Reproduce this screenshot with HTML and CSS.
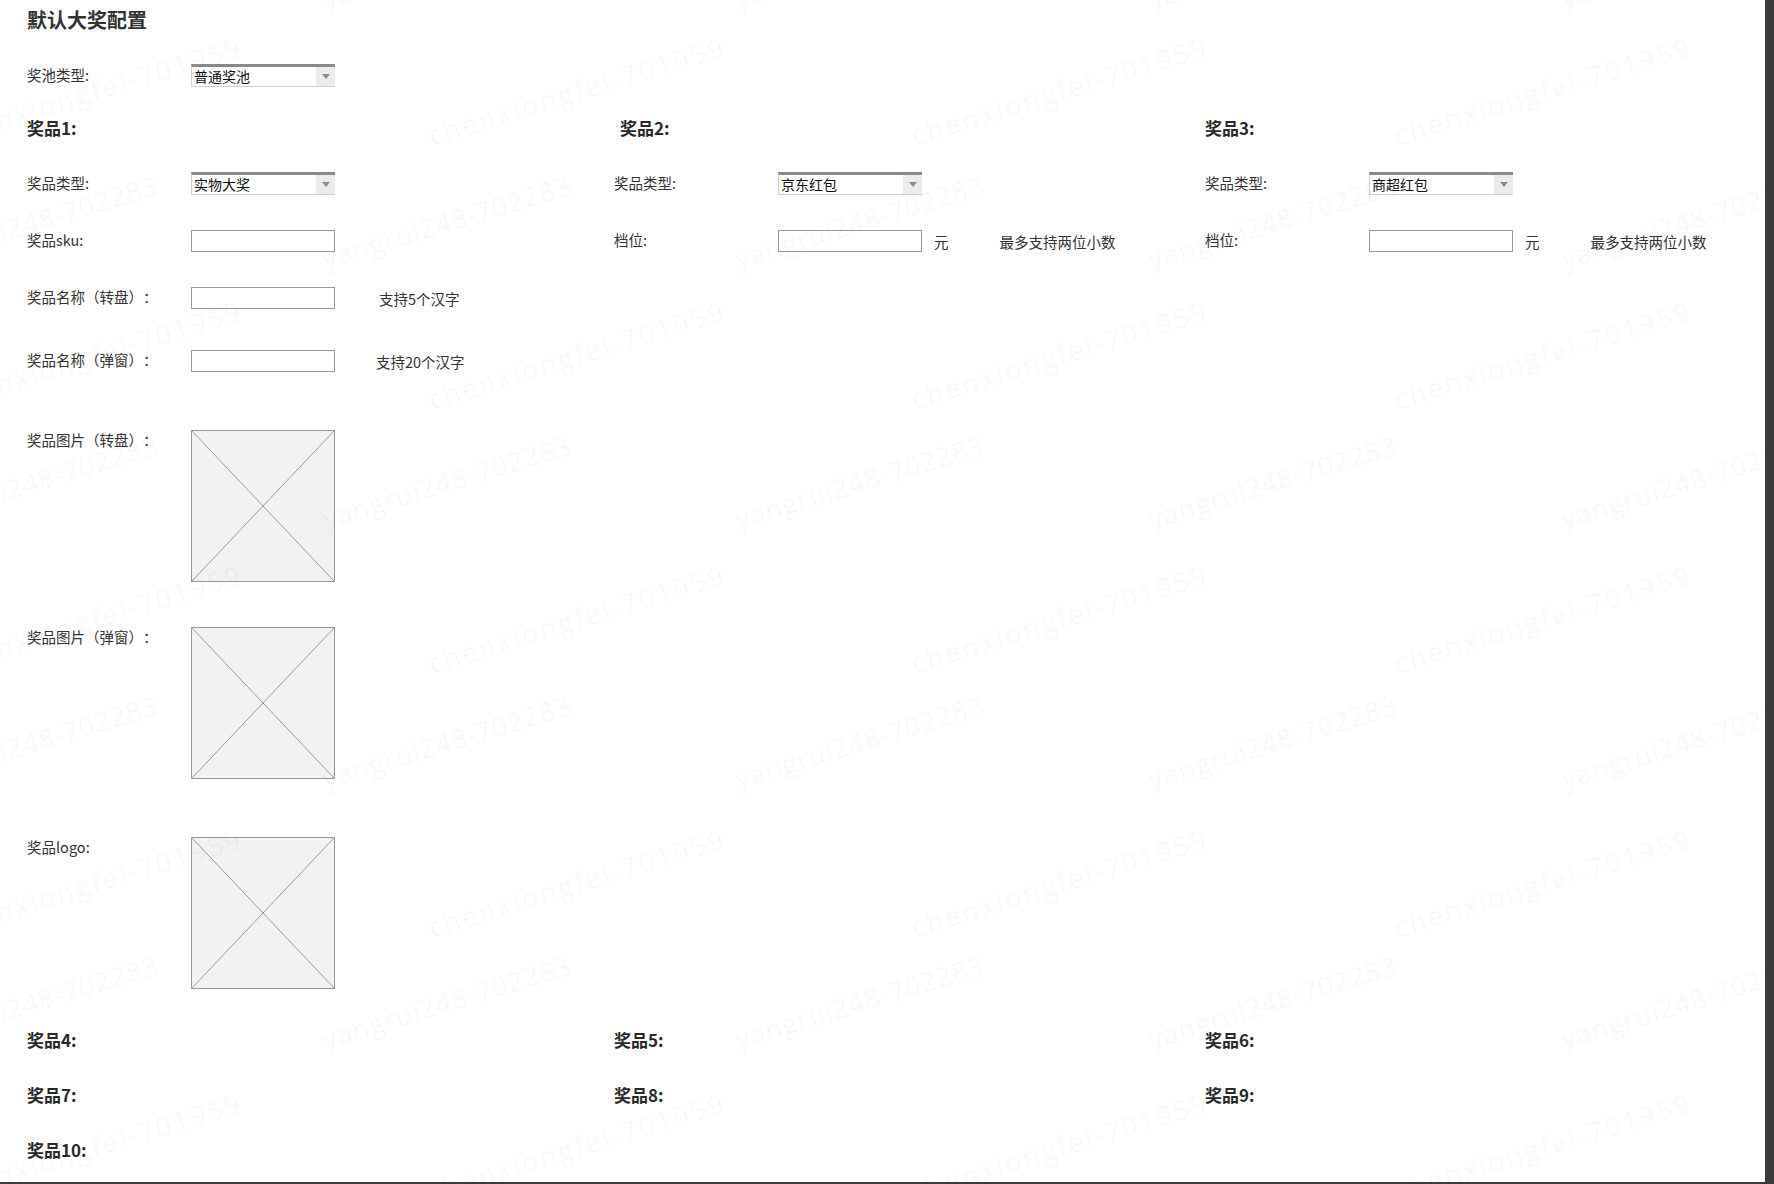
FILE: index.html
```html
<!DOCTYPE html>
<html lang="zh-CN">
<head>
  <meta charset="UTF-8" />
  <title>默认大奖配置</title>
  <link rel="stylesheet" href="styles.css">
</head>
<body>
  <div class="page">
    <h1 class="page-title">默认大奖配置</h1>

    <!-- Pool type -->
    <div class="field pool-field">
      <span class="field-label">奖池类型:</span>
      <div class="select"><span class="select-value">普通奖池</span><span class="select-arrow"></span></div>
    </div>

    <!-- Prizes 1-3 -->
    <div class="prize-grid">
      <section class="prize">
        <h2 class="prize-title">奖品1:</h2>
        <div class="field field-first">
          <span class="field-label">奖品类型:</span>
          <div class="select"><span class="select-value">实物大奖</span><span class="select-arrow"></span></div>
        </div>
        <div class="field">
          <span class="field-label">奖品sku:</span>
          <div class="input"></div>
        </div>
        <div class="field">
          <span class="field-label">奖品名称（转盘）：</span>
          <div class="input"></div>
          <span class="hint">支持5个汉字</span>
        </div>
        <div class="field field-loose">
          <span class="field-label">奖品名称（弹窗）：</span>
          <div class="input"></div>
          <span class="hint hint-near">支持20个汉字</span>
        </div>
        <div class="field field-image gap-lg">
          <span class="field-label">奖品图片（转盘）：</span>
          <div class="image-box">
            <svg viewBox="0 0 144 152" preserveAspectRatio="none"><line x1="0" y1="0" x2="144" y2="152"/><line x1="144" y1="0" x2="0" y2="152"/></svg>
          </div>
        </div>
        <div class="field field-image">
          <span class="field-label">奖品图片（弹窗）：</span>
          <div class="image-box">
            <svg viewBox="0 0 144 152" preserveAspectRatio="none"><line x1="0" y1="0" x2="144" y2="152"/><line x1="144" y1="0" x2="0" y2="152"/></svg>
          </div>
        </div>
        <div class="field field-image gap-lg">
          <span class="field-label">奖品logo:</span>
          <div class="image-box">
            <svg viewBox="0 0 144 152" preserveAspectRatio="none"><line x1="0" y1="0" x2="144" y2="152"/><line x1="144" y1="0" x2="0" y2="152"/></svg>
          </div>
        </div>
      </section>

      <section class="prize">
        <h2 class="prize-title shifted">奖品2:</h2>
        <div class="field field-first">
          <span class="field-label">奖品类型:</span>
          <div class="select"><span class="select-value">京东红包</span><span class="select-arrow"></span></div>
        </div>
        <div class="field">
          <span class="field-label">档位:</span>
          <div class="input"></div>
          <span class="unit">元</span>
          <span class="hint">最多支持两位小数</span>
        </div>
      </section>

      <section class="prize">
        <h2 class="prize-title">奖品3:</h2>
        <div class="field field-first">
          <span class="field-label">奖品类型:</span>
          <div class="select"><span class="select-value">商超红包</span><span class="select-arrow"></span></div>
        </div>
        <div class="field">
          <span class="field-label">档位:</span>
          <div class="input"></div>
          <span class="unit">元</span>
          <span class="hint">最多支持两位小数</span>
        </div>
      </section>
    </div>

    <!-- Prizes 4-10 (collapsed) -->
    <div class="prize-list">
      <h2 class="prize-title">奖品4:</h2>
      <h2 class="prize-title">奖品5:</h2>
      <h2 class="prize-title">奖品6:</h2>
      <h2 class="prize-title">奖品7:</h2>
      <h2 class="prize-title">奖品8:</h2>
      <h2 class="prize-title">奖品9:</h2>
      <h2 class="prize-title">奖品10:</h2>
    </div>

    <!-- Watermark -->
    <div class="watermark" aria-hidden="true">
      <div class="wm-layer wm-chen">
        <span>chenxiongfei-701959</span><span>chenxiongfei-701959</span><span>chenxiongfei-701959</span><span>chenxiongfei-701959</span>
        <span>chenxiongfei-701959</span><span>chenxiongfei-701959</span><span>chenxiongfei-701959</span><span>chenxiongfei-701959</span>
        <span>chenxiongfei-701959</span><span>chenxiongfei-701959</span><span>chenxiongfei-701959</span><span>chenxiongfei-701959</span>
        <span>chenxiongfei-701959</span><span>chenxiongfei-701959</span><span>chenxiongfei-701959</span><span>chenxiongfei-701959</span>
        <span>chenxiongfei-701959</span><span>chenxiongfei-701959</span><span>chenxiongfei-701959</span><span>chenxiongfei-701959</span>
      </div>
      <div class="wm-layer wm-yang">
        <span>yangrui248-702283</span><span>yangrui248-702283</span><span>yangrui248-702283</span><span>yangrui248-702283</span><span>yangrui248-702283</span>
        <span>yangrui248-702283</span><span>yangrui248-702283</span><span>yangrui248-702283</span><span>yangrui248-702283</span><span>yangrui248-702283</span>
        <span>yangrui248-702283</span><span>yangrui248-702283</span><span>yangrui248-702283</span><span>yangrui248-702283</span><span>yangrui248-702283</span>
        <span>yangrui248-702283</span><span>yangrui248-702283</span><span>yangrui248-702283</span><span>yangrui248-702283</span><span>yangrui248-702283</span>
        <span>yangrui248-702283</span><span>yangrui248-702283</span><span>yangrui248-702283</span><span>yangrui248-702283</span><span>yangrui248-702283</span>
      </div>
    </div>
  </div>
</body>
</html>
```

FILE: styles.css
```css
/* Global */
body {
  margin: 0;
  background: #3c3c3c;
  color: #333;
  font-family: "Noto Sans CJK SC", "Liberation Sans", sans-serif;
  font-size: 14.5px;
  text-spacing-trim: space-all;
}
h1, h2 {
  margin: 0;
}
.page {
  position: relative;
  width: 1765px;
  height: 1182px;
  box-sizing: border-box;
  padding: 8px 0 0 27px;
  background: #fff;
  overflow: hidden;
}
.page-title {
  font-size: 20px;
  line-height: 24px;
  font-weight: bold;
}
/* Form rows */
.field {
  display: flex;
  align-items: center;
  margin-top: 35px;
}
.field-label {
  width: 164px;
  flex-shrink: 0;
  line-height: 20px;
  margin-top: -2px;
}
.pool-field { margin-top: 32px; }
.field-first { margin-top: 33px; }
.field-loose { margin-top: 41px; }
.field-image {
  align-items: flex-start;
  margin-top: 45px;
}
.field-image .field-label { margin-top: 0; }
.field-image.gap-lg { margin-top: 58px; }
/* Fake select */
.select {
  display: flex;
  width: 144px;
  height: 23px;
  box-sizing: border-box;
  border: 1px solid #d0d0d0;
  border-top: 3px solid #8a8a8a;
  border-right: none;
  background: #fff;
}
.select-value {
  flex: 1;
  padding-left: 2px;
  line-height: 18px;
  font-size: 14px;
  color: #111;
}
.select-arrow {
  width: 19px;
  display: flex;
  align-items: center;
  justify-content: center;
  background: #ececec;
}
.select-arrow::after {
  content: "";
  border-left: 4px solid transparent;
  border-right: 4px solid transparent;
  border-top: 5px solid #8c8c8c;
}
/* Text input */
.input {
  width: 144px;
  height: 22px;
  box-sizing: border-box;
  border: 1px solid #9a9a9a;
  background: #fff;
}
.unit {
  margin-left: 12px;
}
.hint {
  margin-left: 44px;
}
.hint-near { margin-left: 41px; }
.unit + .hint { margin-left: 51px; }
/* Image placeholder */
.image-box {
  width: 144px;
  height: 152px;
  box-sizing: border-box;
  border: 1px solid #999;
  background: #f2f2f2;
}
.image-box svg {
  display: block;
  width: 100%;
  height: 100%;
}
.image-box line {
  stroke: #999;
  stroke-width: 1;
}
/* Prize columns */
.prize-grid {
  display: grid;
  grid-template-columns: 587px 591px 1fr;
  margin-top: 30px;
}
.prize-title {
  font-size: 17px;
  line-height: 22px;
  font-weight: bold;
  color: #2a2a2a;
}
.prize-title.shifted { padding-left: 6px; }
.prize-list {
  display: grid;
  grid-template-columns: 587px 591px 1fr;
  grid-auto-rows: 22px;
  row-gap: 33px;
  margin-top: 40px;
}
/* Watermark overlay */
.watermark {
  position: absolute;
  inset: 0;
  overflow: hidden;
  pointer-events: none;
}
.wm-layer {
  position: absolute;
  display: grid;
}
.wm-chen {
  left: -148px;
  top: -42px;
  grid-template-columns: repeat(4, 483px);
  grid-auto-rows: 264px;
}
.wm-yang {
  left: -173px;
  top: -169px;
  grid-template-columns: repeat(5, 413px);
  grid-auto-rows: 260px;
}
.wm-layer span {
  display: flex;
  align-items: center;
  justify-content: center;
  transform: rotate(-17deg);
  font-family: "Open Sans", sans-serif;
  font-size: 27px;
  letter-spacing: 1px;
  color: rgba(0, 0, 0, 0.038);
  white-space: nowrap;
}
.wm-chen span { letter-spacing: 2.5px; }
```
